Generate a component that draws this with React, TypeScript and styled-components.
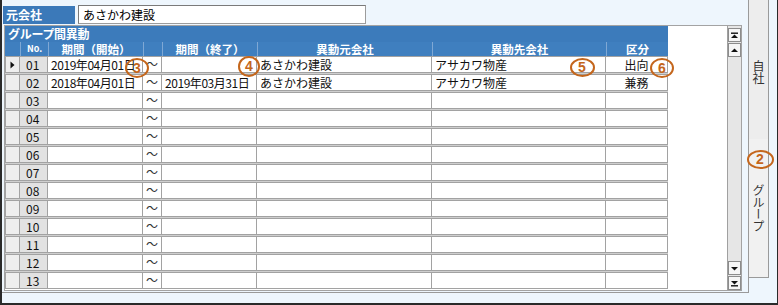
import React from "react";
import styled, { createGlobalStyle } from "styled-components";

const GlobalStyle = createGlobalStyle`
  html, body { margin: 0; padding: 0; }
  body {
    font-family: "Noto Sans CJK JP", "Noto Sans", sans-serif;
    font-size: 12px;
    color: #000;
    background: #eef6fd;
  }
  * { box-sizing: border-box; }
`;

const Frame = styled.div`
  position: relative;
  width: 778px;
  height: 305px;
  background: #eef6fd;
  border-left: 2px solid #2a2a2a;
  border-right: 1px solid #2a2a2a;
  border-bottom: 2px solid #2a2a2a;
  display: flex;
  align-items: flex-start;
  overflow: hidden;
`;

const TabPage = styled.div`
  width: 747px;
  height: 293px;
  border-right: 1px solid #9a9a9a;
  border-bottom: 1px solid #9a9a9a;
  padding: 5px 0 0 1px;
  display: flex;
  flex-direction: column;
`;

const FieldRow = styled.div`
  display: flex;
  align-items: flex-start;
  gap: 3px;
`;

const FieldLabel = styled.div`
  width: 72px;
  height: 18px;
  margin-top: 1px;
  background: #3b79b9;
  color: #fff;
  font-weight: 700;
  font-size: 12px;
  line-height: 18px;
  padding-left: 3px;
`;

const FieldInput = styled.div`
  width: 288px;
  height: 19px;
  background: #fff;
  border: 1px solid #9c9c9c;
  border-top-color: #7a7a7a;
  border-left-color: #7a7a7a;
  font-size: 12px;
  line-height: 17px;
  padding-left: 4px;
`;

const GridPanel = styled.div`
  margin: 1px 0 0 1px;
  width: 738px;
  height: 266px;
  border: 1px solid #a3a3a3;
  background: #fff;
  display: flex;
`;

const GridBody = styled.div`
  flex: 1;
  display: flex;
  flex-direction: column;
`;

const TitleBar = styled.div`
  width: 663px;
  height: 16px;
  background: #3c7bbb;
  color: #fff;
  font-weight: 700;
  font-size: 12px;
  line-height: 16px;
  padding-left: 3px;
  letter-spacing: -0.3px;
`;

const columns = "15px 28px 95px 19px 95px 175px 174px 62px";

const HeaderRow = styled.div`
  width: 663px;
  height: 14px;
  display: grid;
  grid-template-columns: ${columns};
  background: #3f7fbf;
`;

const HeaderCell = styled.div<{ $small?: boolean }>`
  border-left: 1px solid #7fa8d4;
  color: #fff;
  font-weight: 700;
  font-size: ${(p) => (p.$small ? "9px" : "11.5px")};
  line-height: 14px;
  text-align: center;
  white-space: nowrap;
  overflow: hidden;
  &:first-child { border-left: none; }
`;

const Rows = styled.div`
  width: 663px;
  background: #cfcfcf;
  display: flex;
  flex-direction: column;
  gap: 1px;
`;

const Row = styled.div`
  display: grid;
  grid-template-columns: ${columns};
  height: 17px;
`;

type CellKind = "ind" | "no" | "text" | "date" | "center";

const Cell = styled.div<{ $kind: CellKind }>`
  border: 1px solid #a2a2a2;
  border-left-width: ${(p) => (p.$kind === "ind" ? "1px" : "0")};
  background: ${(p) =>
    p.$kind === "ind" ? "#eeeeee" : p.$kind === "no" ? "#e2e2e2" : "#ffffff"};
  font-size: 12px;
  line-height: 15px;
  letter-spacing: ${(p) => (p.$kind === "date" ? "-0.45px" : "0")};
  padding-left: ${(p) =>
    p.$kind === "center" || p.$kind === "ind" ? "0" : p.$kind === "no" ? "6px" : "3px"};
  text-align: ${(p) => (p.$kind === "center" ? "center" : "left")};
  white-space: nowrap;
  overflow: ${(p) => (p.$kind === "center" ? "visible" : "hidden")};
  display: ${(p) => (p.$kind === "ind" ? "flex" : "block")};
  align-items: center;
  justify-content: center;
  color: #111;
`;

const Tilde = styled.span`
  display: block;
  height: 15px;
  line-height: 13px;
  font-size: 12px;
  color: #333;
`;

const ScrollBar = styled.div`
  width: 14px;
  border-left: 1px solid #a0a0a0;
  background: #e6e6e6;
  display: flex;
  flex-direction: column;
  justify-content: space-between;
  padding: 2px 0 0 0;
`;

const ScrollGroup = styled.div`
  display: flex;
  flex-direction: column;
  gap: 1px;
`;

const ScrollBtn = styled.div`
  height: 14px;
  border: 1px solid #8c8c8c;
  background: #f6f6f6;
  display: flex;
  align-items: center;
  justify-content: center;
`;

const TabStrip = styled.div`
  width: 28px;
  display: flex;
  flex-direction: column;
`;

const Tab = styled.div<{ $active?: boolean; $h: number }>`
  width: 20px;
  height: ${(p) => p.$h}px;
  background: ${(p) => (p.$active ? "#f1f1f1" : "#ededed")};
  border-right: 1px solid #9a9a9a;
  border-bottom: ${(p) => (p.$active ? "1px solid #9a9a9a" : "none")};
  display: flex;
  align-items: center;
  justify-content: center;
  writing-mode: vertical-rl;
  font-size: 12px;
  line-height: 19px;
  color: #333;
  padding-top: ${(p) => (p.$active ? "0" : "4px")};
`;

const Callout = styled.div<{ $x: number; $y: number; $w: number; $h: number }>`
  position: absolute;
  left: ${(p) => p.$x - 2 - p.$w / 2}px;
  top: ${(p) => p.$y - p.$h / 2}px;
  width: ${(p) => p.$w}px;
  height: ${(p) => p.$h}px;
  border: 2.5px solid #c4661c;
  border-radius: 50%;
  color: #c4661c;
  font-family: "Liberation Sans", Arial, sans-serif;
  font-weight: 700;
  font-size: 14px;
  line-height: 1;
  display: flex;
  align-items: center;
  justify-content: center;
`;

const Arrow = () => (
  <svg width="5" height="8" viewBox="0 0 5 8">
    <path d="M0.5 0.5 L4.5 4 L0.5 7.5 Z" fill="#111" />
  </svg>
);

const ScrollIcon = ({ dir, bar }: { dir: "up" | "down"; bar?: boolean }) => (
  <svg width="7" height="7" viewBox="0 0 7 7">
    {dir === "up" ? (
      <>
        {bar && <rect x="0" y="0.5" width="7" height="1.4" fill="#111" />}
        <path d={bar ? "M0 6 L3.5 2.6 L7 6 Z" : "M0 5 L3.5 1.5 L7 5 Z"} fill="#111" />
      </>
    ) : (
      <>
        <path d={bar ? "M0 1 L3.5 4.4 L7 1 Z" : "M0 2 L3.5 5.5 L7 2 Z"} fill="#111" />
        {bar && <rect x="0" y="5.1" width="7" height="1.4" fill="#111" />}
      </>
    )}
  </svg>
);

type RowData = {
  no: string;
  start?: string;
  end?: string;
  from?: string;
  to?: string;
  kind?: string;
  current?: boolean;
};

const rows: RowData[] = [
  { no: "01", start: "2019年04月01日", from: "あさかわ建設", to: "アサカワ物産", kind: "出向", current: true },
  { no: "02", start: "2018年04月01日", end: "2019年03月31日", from: "あさかわ建設", to: "アサカワ物産", kind: "兼務" },
  ...["03", "04", "05", "06", "07", "08", "09", "10", "11", "12", "13"].map((no) => ({ no })),
];

const callouts = [
  { n: "3", x: 137, y: 68, w: 24, h: 20 },
  { n: "4", x: 249, y: 66, w: 22, h: 21 },
  { n: "5", x: 582, y: 67, w: 25, h: 19 },
  { n: "6", x: 662, y: 68, w: 24, h: 20 },
  { n: "2", x: 760, y: 159, w: 27, h: 19 },
];

export default function App() {
  return (
    <>
      <GlobalStyle />
      <Frame>
        <TabPage>
          <FieldRow>
            <FieldLabel>元会社</FieldLabel>
            <FieldInput>あさかわ建設</FieldInput>
          </FieldRow>
          <GridPanel>
            <GridBody>
              <TitleBar>グループ間異動</TitleBar>
              <HeaderRow>
                <HeaderCell />
                <HeaderCell $small>No.</HeaderCell>
                <HeaderCell>期間（開始）</HeaderCell>
                <HeaderCell />
                <HeaderCell>期間（終了）</HeaderCell>
                <HeaderCell>異動元会社</HeaderCell>
                <HeaderCell>異動先会社</HeaderCell>
                <HeaderCell>区分</HeaderCell>
              </HeaderRow>
              <Rows>
                {rows.map((r) => (
                  <Row key={r.no}>
                    <Cell $kind="ind">{r.current && <Arrow />}</Cell>
                    <Cell $kind="no">{r.no}</Cell>
                    <Cell $kind="date">{r.start}</Cell>
                    <Cell $kind="center">
                      <Tilde>～</Tilde>
                    </Cell>
                    <Cell $kind="date">{r.end}</Cell>
                    <Cell $kind="text">{r.from}</Cell>
                    <Cell $kind="text">{r.to}</Cell>
                    <Cell $kind="center">{r.kind}</Cell>
                  </Row>
                ))}
              </Rows>
            </GridBody>
            <ScrollBar>
              <ScrollGroup>
                <ScrollBtn>
                  <ScrollIcon dir="up" bar />
                </ScrollBtn>
                <ScrollBtn>
                  <ScrollIcon dir="up" />
                </ScrollBtn>
              </ScrollGroup>
              <ScrollGroup>
                <ScrollBtn>
                  <ScrollIcon dir="down" />
                </ScrollBtn>
                <ScrollBtn>
                  <ScrollIcon dir="down" bar />
                </ScrollBtn>
              </ScrollGroup>
            </ScrollBar>
          </GridPanel>
        </TabPage>
        <TabStrip>
          <Tab $h={139}>自社</Tab>
          <Tab $h={139} $active>
            グループ
          </Tab>
        </TabStrip>
        {callouts.map((c) => (
          <Callout key={c.n} $x={c.x} $y={c.y} $w={c.w} $h={c.h}>
            {c.n}
          </Callout>
        ))}
      </Frame>
    </>
  );
}
